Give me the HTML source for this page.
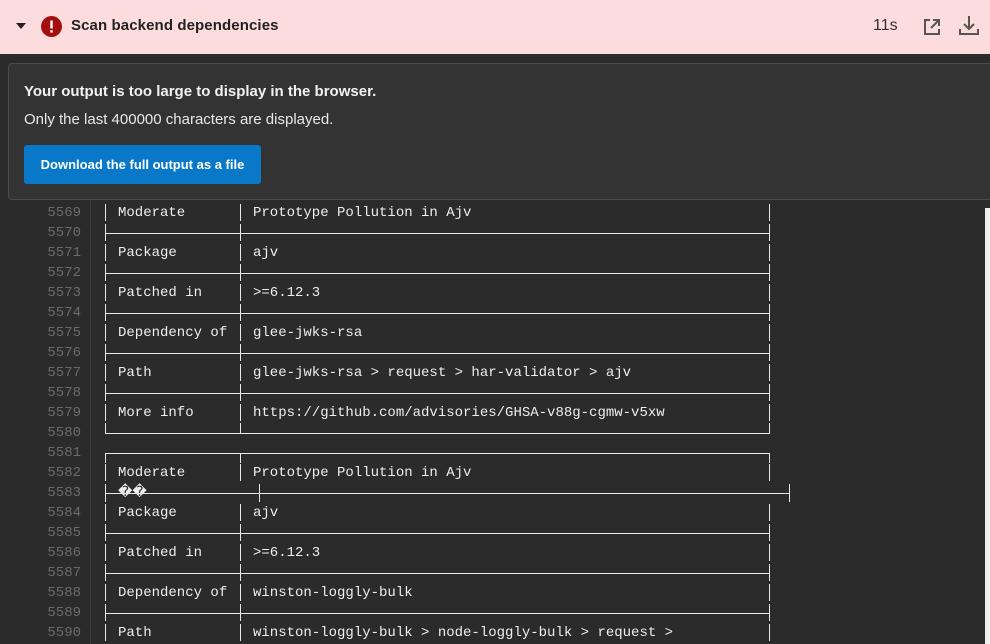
<!DOCTYPE html>
<html><head><meta charset="utf-8"><style>
*{margin:0;padding:0;box-sizing:border-box}
body{width:990px;height:644px;overflow:hidden;background:#2b2b2b;position:relative;font-family:"Liberation Sans",sans-serif}
#hdr{position:absolute;left:0;top:0;width:990px;height:54px;background:#fcdcdc}
#hdr .t{position:absolute;left:71px;top:17px;font-size:15px;font-weight:bold;color:#222;letter-spacing:0.1px}
#hdr .s{position:absolute;left:873px;top:17px;font-size:16px;color:#333}
#panel{position:absolute;left:8px;top:63px;width:990px;height:137px;background:#333;border:1px solid #4b4b4b;border-radius:4px;z-index:3}
#panel .a{position:absolute;left:15px;top:19px;font-size:15px;font-weight:bold;color:#f2f2f2}
#panel .b{position:absolute;left:15px;top:47px;font-size:15px;color:#e8e8e8}
#panel .btn{position:absolute;left:15px;top:81px;width:237px;height:39px;background:#0a78c8;border-radius:3px;color:#fff;font-size:13px;font-weight:bold;line-height:39px;text-align:center}
.ln{position:absolute;left:0;width:81px;text-align:right;font:14px "Liberation Mono",monospace;color:#6a6a6a;height:20px;line-height:20px}
.tx{position:absolute;font:14px "Liberation Mono",monospace;color:#eee;height:20px;line-height:20px;white-space:pre}
.v{position:absolute;width:1px;background:#e8e8e8}
.h{position:absolute;height:1px;background:#e8e8e8}
#gut{position:absolute;left:90px;top:200px;width:1px;height:444px;background:#3a3a3a}
#sb{position:absolute;left:985px;top:208px;width:5px;height:436px;background:#f0f0f0}
</style></head><body>
<div id="hdr">
<svg style="position:absolute;left:16px;top:23px" width="10" height="6"><path d="M0 0H10L5 6Z" fill="#222"/></svg>
<svg style="position:absolute;left:41px;top:16px" width="21" height="21"><circle cx="10.5" cy="10.5" r="10.5" fill="#a50e0e"/><rect x="9.3" y="4.5" width="2.4" height="8" fill="#fff"/><rect x="9.3" y="14.2" width="2.4" height="2.4" fill="#fff"/></svg>
<div class="t">Scan backend dependencies</div>
<div class="s">11s</div>
<svg style="position:absolute;left:922px;top:17px" width="20" height="20" fill="none" stroke="#555" stroke-width="2"><path d="M8 3H3V17H17V12M11 3H17V9M17 3L9 11"/></svg>
<svg style="position:absolute;left:958px;top:14px" width="22" height="22" fill="none" stroke="#555" stroke-width="2"><path d="M11 2V15M6 10L11 15L16 10M2 15V20H20V15"/></svg>
</div>
<div id="panel">
<div class="a">Your output is too large to display in the browser.</div>
<div class="b">Only the last 400000 characters are displayed.</div>
<div class="btn">Download the full output as a file</div>
</div>
<div id="gut"></div>
<div id="sb"></div>
<div id="log">
<div class="tx" style="left:118px;top:203px">Moderate</div><div class="tx" style="left:253px;top:203px">Prototype Pollution in Ajv</div>
<div class="tx" style="left:118px;top:243px">Package</div><div class="tx" style="left:253px;top:243px">ajv</div>
<div class="tx" style="left:118px;top:283px">Patched in</div><div class="tx" style="left:253px;top:283px">&gt;=6.12.3</div>
<div class="tx" style="left:118px;top:323px">Dependency of</div><div class="tx" style="left:253px;top:323px">glee-jwks-rsa</div>
<div class="tx" style="left:118px;top:363px">Path</div><div class="tx" style="left:253px;top:363px">glee-jwks-rsa &gt; request &gt; har-validator &gt; ajv</div>
<div class="tx" style="left:118px;top:403px">More info</div><div class="tx" style="left:253px;top:403px">https://github.com/advisories/GHSA-v88g-cgmw-v5xw</div>
<div class="tx" style="left:118px;top:463px">Moderate</div><div class="tx" style="left:253px;top:463px">Prototype Pollution in Ajv</div>
<div class="tx" style="left:118px;top:483px">��</div>
<div class="tx" style="left:118px;top:503px">Package</div><div class="tx" style="left:253px;top:503px">ajv</div>
<div class="tx" style="left:118px;top:543px">Patched in</div><div class="tx" style="left:253px;top:543px">&gt;=6.12.3</div>
<div class="tx" style="left:118px;top:583px">Dependency of</div><div class="tx" style="left:253px;top:583px">winston-loggly-bulk</div>
<div class="tx" style="left:118px;top:623px">Path</div><div class="tx" style="left:253px;top:623px">winston-loggly-bulk &gt; node-loggly-bulk &gt; request &gt;</div>
<div class="ln" style="top:203px">5569</div><div class="ln" style="top:223px">5570</div><div class="ln" style="top:243px">5571</div><div class="ln" style="top:263px">5572</div><div class="ln" style="top:283px">5573</div><div class="ln" style="top:303px">5574</div><div class="ln" style="top:323px">5575</div><div class="ln" style="top:343px">5576</div><div class="ln" style="top:363px">5577</div><div class="ln" style="top:383px">5578</div><div class="ln" style="top:403px">5579</div><div class="ln" style="top:423px">5580</div><div class="ln" style="top:443px">5581</div><div class="ln" style="top:463px">5582</div><div class="ln" style="top:483px">5583</div><div class="ln" style="top:503px">5584</div><div class="ln" style="top:523px">5585</div><div class="ln" style="top:543px">5586</div><div class="ln" style="top:563px">5587</div><div class="ln" style="top:583px">5588</div><div class="ln" style="top:603px">5589</div><div class="ln" style="top:623px">5590</div>
</div>
<script>
var L=document.getElementById('log');
function d(c,x,y,w,h){var e=document.createElement('div');e.className=c;e.style.left=x+'px';e.style.top=y+'px';if(w)e.style.width=w+'px';if(h)e.style.height=h+'px';L.appendChild(e);}
for(var k=0;k<22;k++){var n=5569+k,t=203+20*k;
 if(n==5581){[105,240,769].forEach(function(x){d('v',x,t+10,0,10)});d('h',105,t+10,665);continue;}
 if(n==5580){[105,240,769].forEach(function(x){d('v',x,t,0,10)});d('h',105,t+10,665);continue;}
 if(n==5583){d('v',105,t+1,0,18);d('h',105,t+10,685);d('v',259,t+1,0,18);d('v',789,t+1,0,18);continue;}
 [105,240,769].forEach(function(x){d('v',x,t+1,0,17)});
 var sep=(n<5580&&n%2==0)||(n>5583&&n%2==1);
 if(sep)d('h',105,t+10,665);
}
</script>
</body></html>
